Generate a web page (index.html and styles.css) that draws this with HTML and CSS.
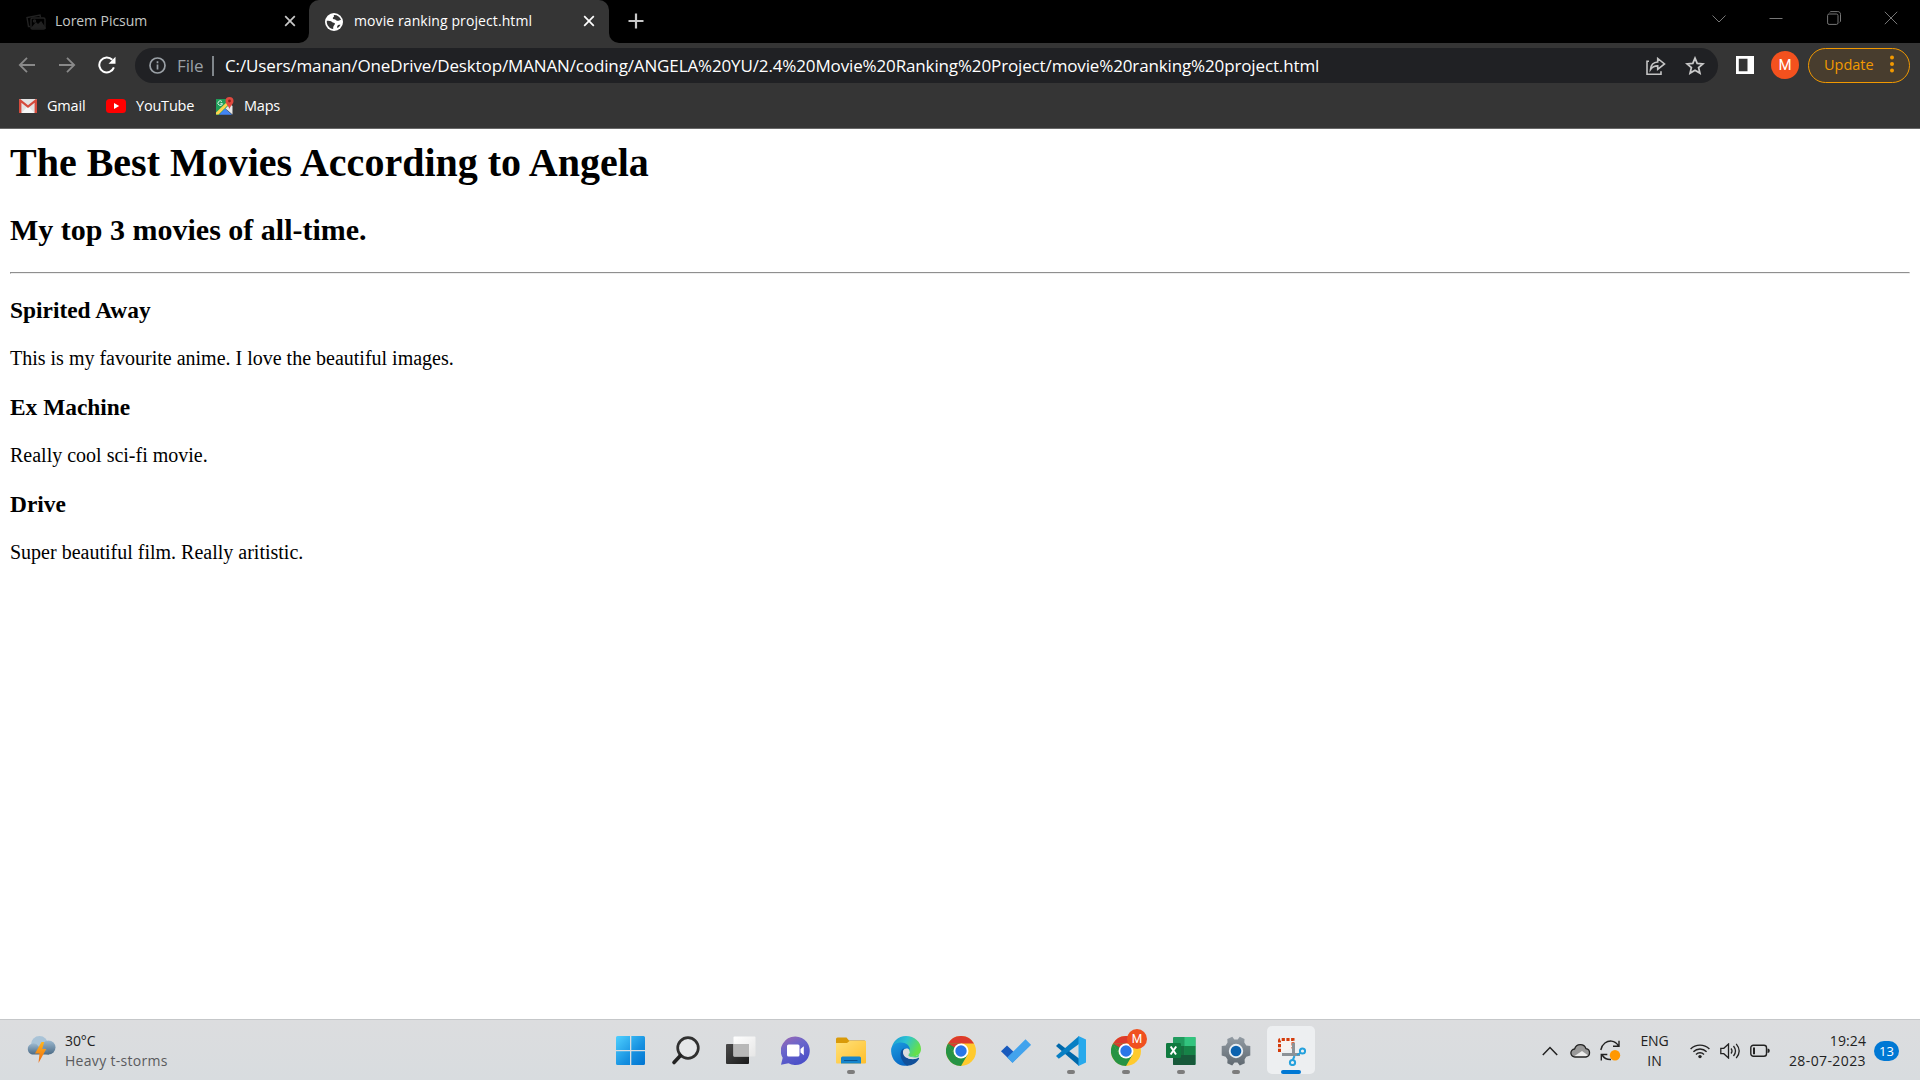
FILE: index.html
```html
<!DOCTYPE html>
<html lang="en">
<head>
<meta charset="utf-8">
<title>movie ranking project.html</title>
<link rel="stylesheet" href="styles.css">
</head>
<body>
<div class="screen">
  <header class="browser">
    <div class="tabs">
      <div class="tab">
        <svg class="tab-icon" width="20" height="16" viewBox="0 0 20 16" fill="none" stroke="#222" stroke-width="1.4"><path d="M4 12.5H2.5L1 3.5 14 1l.5 2.500"/><rect x="5" y="4" width="14" height="11" rx="1.500"/><path d="M6 14l4-5 2 2 3-3 4 6z" fill="#222"/><circle cx="8.500" cy="7" r="1"/></svg>
        <span class="tab-title first-title">Lorem Picsum</span>
        <svg class="tab-close" width="12" height="12" viewBox="0 0 12 12" stroke="#c8c8c8" stroke-width="1.700"><path d="M1.200 1.200l9.600 9.600M10.800 1.200l-9.600 9.600"/></svg>
      </div>
      <div class="tab active">
        <svg class="tab-icon" width="18" height="18" viewBox="0 0 18 18"><circle cx="9" cy="9" r="9" fill="#fff"/><path d="M1.800 7.800c2.200.3 4.200-.2 5.200 1.100.8 1 2.700.3 2.900 1.700.2 1.600-2 1.700-1.700 5.400C4.600 15.800 1.300 12 1.800 7.800zM8.600 2c3.600-.3 6.500 1.800 7.400 5-1.500-.4-2.200 1-3.700.7-1.400-.2-1.600-1.700-3.200-1.500-1.300.1-1.700-1.200-.8-1.900.8-.6 1-1.500.3-2.300zM12.300 12.900c.5-.9 1.800-1.300 3.200-1.100-.7 1.500-1.800 2.600-3.200 3.300-.2-.8-.3-1.500 0-2.200z" fill="#353535"/></svg>
        <span class="tab-title second-title">movie ranking project.html</span>
        <svg class="tab-close" width="12" height="12" viewBox="0 0 12 12" stroke="#fff" stroke-width="1.700"><path d="M1.200 1.200l9.600 9.600M10.800 1.200l-9.600 9.600"/></svg>
      </div>
      <svg class="new-tab" width="16" height="16" viewBox="0 0 16 16" stroke="#c8c8c8" stroke-width="2.200"><path d="M8 .5v15M.5 8h15"/></svg>
      <div class="window-controls">
        <svg width="14" height="14" viewBox="0 0 14 14"><path d="M.5 4.500L7 11l6.500-6.500"/></svg>
        <svg width="14" height="14" viewBox="0 0 14 14"><path d="M.5 7.500h13"/></svg>
        <svg width="14" height="14" viewBox="0 0 14 14"><rect x=".6" y="3" width="10.400" height="10.400" rx="1.500"/><path d="M2.800 1.500l.7-.9h7.300c1.500 0 2.700 1 2.700 2.700v7l-.8 1"/></svg>
        <svg width="14" height="14" viewBox="0 0 14 14"><path d="M.8.8l12.400 12.400M13.200.8L.8 13.200"/></svg>
      </div>
    </div>
    <div class="toolbar">
      <div class="nav">
        <svg width="18" height="18" viewBox="0 0 18 18" fill="none" stroke="#898989" stroke-width="1.800"><path d="M17 9H2M9 1.800L1.800 9 9 16.200"/></svg>
        <svg width="18" height="18" viewBox="0 0 18 18" fill="none" stroke="#898989" stroke-width="1.800"><path d="M1 9h15M9 1.800L16.200 9 9 16.200"/></svg>
        <svg width="18" height="18" viewBox="0 0 18 18"><path d="M15.900 11.400A7.500 7.500 0 1 1 14.300 3.800" fill="none" stroke="#fff" stroke-width="2"/><path d="M17.500.7v7H10.500z" fill="#fff"/></svg>
      </div>
      <div class="omnibox">
        <svg width="17" height="17" viewBox="0 0 17 17" fill="none" stroke="#9aa0a6" stroke-width="1.700"><circle cx="8.500" cy="8.500" r="7.500"/><path d="M8.500 7.500v5M8.500 4.300v1.900"/></svg>
        <span class="scheme">File</span>
        <i class="separator"></i>
        <span class="url">C:/Users/manan/OneDrive/Desktop/MANAN/coding/ANGELA%20YU/2.4%20Movie%20Ranking%20Project/movie%20ranking%20project.html</span>
        <svg class="share" width="20" height="18" viewBox="0 0 20 18" fill="none" stroke="#c4c4c4" stroke-width="1.600"><path d="M3 4.300H1v12.900h14v-3"/><path d="M4.500 12.500c.4-4.600 3.100-7.300 7.200-7.500V1.500L18.500 7l-6.800 5.300V8.900c-3.100 0-5.400 1-7.200 3.600z"/></svg>
        <svg class="star" width="20" height="19" viewBox="0 0 20 19" fill="none" stroke="#c9c9c9" stroke-width="1.800"><path d="M10 2.200l2.200 5.200 5.700.5-4.300 3.700 1.300 5.500-4.900-2.900-4.900 2.900 1.300-5.500L2.100 7.900l5.700-.5z"/></svg>
      </div>
      <svg class="side-panel" width="18" height="18" viewBox="0 0 18 18"><path fill="#fff" fill-rule="evenodd" d="M0 0h18v18H0zM2.800 2.800v12.400h8.700V2.800z"/></svg>
      <span class="avatar">M</span>
      <div class="update"><span>Update</span><svg width="4" height="18" viewBox="0 0 4 18" fill="#f29900"><circle cx="2" cy="2.500" r="2"/><circle cx="2" cy="9" r="2"/><circle cx="2" cy="15.500" r="2"/></svg></div>
    </div>
    <nav class="bookmarks">
      <div class="bookmark gmail">
        <svg width="18" height="14" viewBox="0 0 18 14"><rect width="18" height="14" rx="1.200" fill="#e3e3e3"/><path d="M2.500 14L9 7l6.500 7z" fill="#f7f7f7"/><path d="M0 14V1.200C0 .5.500 0 1.200 0L9 6.300 16.800 0c.7 0 1.200.5 1.200 1.200V14h-2.400V3.700L9 9 2.400 3.700V14z" fill="#d54b3d"/></svg>
        <span>Gmail</span>
      </div>
      <div class="bookmark youtube">
        <svg width="20" height="14" viewBox="0 0 20 14"><rect width="20" height="14" rx="3.500" fill="#f00"/><path d="M8 4l5.200 3L8 10z" fill="#fff"/></svg>
        <span>YouTube</span>
      </div>
      <div class="bookmark maps">
        <svg width="18" height="18" viewBox="0 0 18 18"><path d="M0 2h13v7L3 18H0z" fill="#1f9d59"/><path d="M3 17.700L9 11.500l7 6.200z" fill="#4285f4"/><path d="M0 15.500L12 4l2 2L2.500 17.500H0z" fill="#ffd34d"/><path d="M9.500 11.500L14 7l2.500 2v8.500z" fill="#e8e8e8"/><path d="M6 4.600a2.300 2.300 0 1 0 .5 2.100H4.400" fill="none" stroke="#dff4e7" stroke-width="1"/><path d="M13.500 12.500C13.200 9 9.500 7.500 9.500 4a4 4 0 0 1 8 0c0 3.500-3.700 5-4 8.500z" fill="#e04a3f"/><circle cx="13.500" cy="4" r="1.400" fill="#8d221b"/></svg>
        <span>Maps</span>
      </div>
    </nav>
  </header>

  <main class="page">
    <h1>The Best Movies According to Angela</h1>
    <h2>My top 3 movies of all-time.</h2>
    <hr>
    <h3>Spirited Away</h3>
    <p>This is my favourite anime. I love the beautiful images.</p>
    <h3>Ex Machine</h3>
    <p>Really cool sci-fi movie.</p>
    <h3>Drive</h3>
    <p>Super beautiful film. Really aritistic.</p>
  </main>

  <footer class="taskbar">
    <svg width="0" height="0" class="defs">
      <defs>
        <linearGradient id="win" x1="0" y1="0" x2="1" y2="1"><stop offset="0" stop-color="#4fd0ff"/><stop offset=".6" stop-color="#1690e0"/><stop offset="1" stop-color="#0074d1"/></linearGradient>
        <linearGradient id="dark" x1="0" y1="0" x2="1" y2="1"><stop offset="0" stop-color="#4a4a4a"/><stop offset="1" stop-color="#1a1a1a"/></linearGradient>
        <linearGradient id="light" x1="0" y1="0" x2="1" y2="1"><stop offset="0" stop-color="#fff"/><stop offset="1" stop-color="#e6e6e6"/></linearGradient>
        <linearGradient id="chat" x1="0" y1="0" x2=".5" y2="1"><stop offset="0" stop-color="#a067b0"/><stop offset=".45" stop-color="#6a66cb"/><stop offset="1" stop-color="#4c50c8"/></linearGradient>
        <linearGradient id="folder" x1="0" y1="0" x2="1" y2="1"><stop offset="0" stop-color="#ffe17a"/><stop offset="1" stop-color="#ffbf2b"/></linearGradient>
        <linearGradient id="edge-top" x1="0" y1="0" x2="1" y2=".4"><stop offset="0" stop-color="#1695d5"/><stop offset=".5" stop-color="#2cc3d2"/><stop offset="1" stop-color="#66e04a"/></linearGradient>
        <linearGradient id="edge-left" x1="0" y1="0" x2=".5" y2="1"><stop offset="0" stop-color="#1b9de0"/><stop offset="1" stop-color="#0867c4"/></linearGradient>
        <linearGradient id="gear" x1="0" y1="0" x2="0" y2="1"><stop offset="0" stop-color="#929ba3"/><stop offset="1" stop-color="#606971"/></linearGradient>
        <linearGradient id="cloud" x1="0" y1="0" x2="0" y2="1"><stop offset="0" stop-color="#9bb8cf"/><stop offset="1" stop-color="#4c6b86"/></linearGradient>
        <linearGradient id="bolt" x1="0" y1="0" x2="0" y2="1"><stop offset="0" stop-color="#ffb51d"/><stop offset="1" stop-color="#ee6810"/></linearGradient>
        <symbol id="chrome" viewBox="0 0 30 30"><circle cx="15" cy="15" r="15" fill="#ffca2e"/><path d="M2 7.500A15 15 0 0 1 28 7.500H15z" fill="#dc3a2d"/><path d="M2 7.500A15 15 0 0 0 15 30l6.500-11.300L8.500 18.700z" fill="#269344"/><path d="M2 7.500L8.500 18.700 15 15V7.500z" fill="#269344"/><path d="M2 7.500h13v7l-5 2z" fill="#dc3a2d"/><path d="M2 7.500L8.500 18.800l4-5z" fill="#269344"/><circle cx="15" cy="15" r="7.500" fill="#fff"/><circle cx="15" cy="15" r="5.700" fill="#2a76e8"/></symbol>
      </defs>
    </svg>
    <div class="weather">
      <svg width="31" height="28" viewBox="0 0 31 28"><circle cx="14.500" cy="8.500" r="8.500" fill="#a9c3d7"/><circle cx="23.500" cy="11.500" r="7" fill="url(#cloud)"/><path d="M6 8a6 6 0 0 1 7.500 2.500c4 .5 10 2 10.500 8H7A5.600 5.600 0 0 1 6 8z" fill="url(#cloud)"/><path d="M16.500 6h2.700l-2 7h4.100L13.500 27l1-9.500H10z" fill="url(#bolt)"/></svg>
      <div class="weather-text"><div class="temp">30°C</div><div class="condition">Heavy t-storms</div></div>
    </div>
    <div class="apps">
      <div class="app"><svg width="30" height="30" viewBox="0 0 30 30"><path d="M1.500 0H14v14H0V1.500Q0 0 1.500 0zM15.300 0h12.200Q29 0 29 1.500V14H15.300zM0 15.300h14V29H1.500Q0 29 0 27.500zM15.300 15.300H29v12.200q0 1.500-1.500 1.500H15.300z" fill="url(#win)"/></svg></div>
      <div class="app"><svg width="30" height="30" viewBox="0 0 30 30"><circle cx="17" cy="12" r="10.300" fill="#e5e7e9" stroke="#303030" stroke-width="2.700"/><path d="M9.500 19.500l-6.500 7" stroke="#222" stroke-width="3.600" stroke-linecap="round"/></svg></div>
      <div class="app"><svg width="30" height="30" viewBox="0 0 30 30"><rect y="8" width="23" height="20" rx="1" fill="url(#dark)"/><rect x="7.500" y=".5" width="22" height="20" rx="1" fill="url(#light)"/><path d="M7.500 8H23v12.500H7.500z" fill="#b8b8b8"/></svg></div>
      <div class="app"><svg width="30" height="30" viewBox="0 0 30 30"><path d="M14.500.5a14.300 14.300 0 1 1-7 26.800L0 28.800l1.700-7A14.300 14.300 0 0 1 14.500.5z" fill="url(#chat)"/><rect x="6" y="8.500" width="12.500" height="12" rx="1.500" fill="#fff"/><path d="M19.500 13l3.300-2.800v9l-3.300-2.800z" fill="#fff"/></svg></div>
      <div class="app running"><svg width="30" height="30" viewBox="0 0 30 30"><path d="M0 3q0-1.500 1.500-1.500h9L13 4.500h15.500Q30 4.500 30 6v4H0z" fill="#d99a09"/><path d="M0 7h11l2.500-2H30v21.500q0 1-1 1H1q-1 0-1-1z" fill="url(#folder)"/><path d="M5 27.500V22q0-1.500 1.500-1.500h17q1.500 0 1.500 1.500v5.500z" fill="#1585cc"/><path d="M8 24.500h13.500" stroke="#09538f" stroke-width="1"/></svg></div>
      <div class="app"><svg width="30" height="30" viewBox="0 0 30 30"><path d="M.5 14C.7 6 7.200 0 15 0c8.500 0 15 6 15 13 0 4.700-3.800 7.500-8 7.500-4 0-5.500-1.300-3.500-3.500L17 11z" fill="url(#edge-top)"/><path d="M.1 15C0 8.500 5.500 6.500 10 6.500c5 0 9 3 9 7.500-1.500-2.800-7.300-2-7.300 3 0 6 5 9 9 10C13 34 .5 27.500.1 15z" fill="url(#edge-left)"/><path d="M13.200 12.200C7.500 14 8.500 24.500 16 29.800c5.500 0 9.800-3.200 12-7 .4-.8-.2-1.200-.9-.8C21 24.500 12 22.500 12 16.500c0-2 .5-3.300 1.200-4.300z" fill="#11509a"/><path d="M12.300 15c.5-2.800 5.800-3.200 6.400.7.300 1.800-1.700 2.300-.6 3.700 1.400 1.700 6.200 1.200 8.800.2v2.500C21 25 12 22 12.300 15z" fill="#dcdee0"/><path d="M18.700 14c.3 2.300-1.700 3.200-.6 4.700 1.700 2.400 8 1.900 10.300-1l-1 3.300c-2 .8-8 .8-10-1.200z" fill="#4fd67c"/></svg></div>
      <div class="app"><svg width="30" height="30"><use href="#chrome"/></svg></div>
      <div class="app"><svg width="30" height="30" viewBox="0 0 30 30"><path d="M0 15.300L6 9.500l11.500 11-6 6z" fill="#185abd"/><path d="M24.500 3.300l5.700 5.600-18.700 18-5.300-5.500z" fill="#42a3ed"/></svg></div>
      <div class="app running"><svg width="30" height="30" viewBox="0 0 30 30"><path d="M0 10l2.800-2.700L23 22.500V30z" fill="#0068aa"/><path d="M0 20l2.800 2.700L23 8V0z" fill="#087fc4"/><path d="M22.500 0L30 3.500v23L22.500 30z" fill="#28a9ec"/></svg></div>
      <div class="app running"><svg width="30" height="30"><use href="#chrome"/></svg><span class="profile">M</span></div>
      <div class="app running"><svg width="30" height="30" viewBox="0 0 30 30"><rect x="7" y="1" width="22.500" height="28" rx="1" fill="#219b5e"/><path d="M18.500 1h11v9h-11z" fill="#32c47e"/><path d="M7 10h11.500v9H7z" fill="#176f40"/><path d="M18.500 10h11v9h-11z" fill="#168347"/><path d="M7 19h22.500v9q0 1-1 1H8q-1 0-1-1z" fill="#17593a"/><rect y="7" width="15" height="15" rx="1.300" fill="#0f7a3f"/><path d="M4.700 10.500l5.300 8M10.200 10.500l-5.600 8" stroke="#fff" stroke-width="2"/></svg></div>
      <div class="app running"><svg width="30" height="30" viewBox="0 0 30 30"><path d="M11.300.7l2 2.900h3.400l2-2.900 4.800 2.200-.2 3.700 2 2.900 4 .5v9.500l-4 1.200-1.700 2.900.2 3.600-5 2.400-2.300-3h-3l-2.300 3-4.900-2.400.2-3.600-1.800-2.900-4-1.200V10l4-.6 1.800-2.900-.2-3.600z" fill="url(#gear)"/><circle cx="15" cy="15" r="7.200" fill="#e8eef3"/><circle cx="15" cy="15" r="5.300" fill="#0b62af"/></svg></div>
      <div class="app running current"><svg width="30" height="30" viewBox="0 0 30 30"><path d="M3.500 16V4.500q0-1 1-1H17v9" fill="#f7f3f1" stroke="#d43b0a" stroke-width="3" stroke-dasharray="3.200 1.500"/><path d="M17.500 7v12.500M6 18.500h18" stroke="#8c9297" stroke-width="3"/><g fill="none" stroke="#25a1dd" stroke-width="2"><circle cx="26.500" cy="15" r="2.600"/><circle cx="16.500" cy="26.500" r="2.600"/><path d="M24.500 17l-3.500 2M17 23.500l1.500-3.500"/></g></svg></div>
    </div>
    <div class="tray">
      <svg class="up" width="16" height="10" viewBox="0 0 16 10" fill="none" stroke="#222" stroke-width="1.500"><path d="M.8 9L8 1.500 15.200 9"/></svg>
      <svg class="cloud" width="21" height="14" viewBox="0 0 21 14"><path d="M5.200 13a4 4 0 0 1-.6-8A6 6 0 0 1 16 4.700a4.200 4.200 0 0 1 0 8.300z" fill="#999"/><path d="M3 13L12 7l7 5-3 1.500H5z" fill="#ededed"/><path d="M5.200 13a4 4 0 0 1-.6-8A6 6 0 0 1 16 4.700a4.200 4.200 0 0 1 0 8.300z" fill="none" stroke="#222" stroke-width="1.300"/></svg>
      <svg class="sync" width="21" height="21" viewBox="0 0 21 21" fill="none" stroke="#222" stroke-width="1.400"><path d="M.8 10C2 3.500 7 .8 11.500 1.100c3.500.4 5.800 2.700 7.200 5M19 .8v5.500h-6M11 19.500c-4.500.3-7-1.500-9-4.500M1.300 20.500v-6h6"/><circle cx="15" cy="15.300" r="5.200" fill="#ff9800" stroke="none"/></svg>
      <div class="language"><div>ENG</div><div>IN</div></div>
      <svg class="wifi" width="20" height="16" viewBox="0 0 20 16" fill="none" stroke="#222" stroke-width="1.400"><path d="M.6 6a13.300 13.300 0 0 1 18.800 0M3.400 8.800a9.300 9.300 0 0 1 13.200 0M6 11.500a5.600 5.600 0 0 1 8 0"/><circle cx="10" cy="13.600" r="1.700" fill="#222" stroke="none"/></svg>
      <svg class="volume" width="20" height="16" viewBox="0 0 20 16" fill="none" stroke="#222" stroke-width="1.300"><path d="M.8 5.300h3L8.500 1v14l-4.700-4.300h-3z"/><path d="M11 5.500q2 2.500 0 5M13.500 3q4 5 0 10M16.200.8q6 7.200 0 14.400"/></svg>
      <svg class="battery" width="20" height="14" viewBox="0 0 20 14"><rect x=".8" y="1.300" width="15.700" height="11" rx="2.500" fill="none" stroke="#222" stroke-width="1.400"/><path d="M3 3.500h2v6.800H3zM17.500 4.500q2.300 0 2.300 2.300t-2.300 2.300z" fill="#222"/></svg>
      <div class="clock"><div class="time">19:24</div><div class="date">28-07-2023</div></div>
      <span class="count">13</span>
    </div>
  </footer>
</div>
</body>
</html>
```

FILE: styles.css
```css
* { box-sizing: border-box; }
body { margin: 0; font-family: "Open Sans", "Noto Sans", sans-serif; }
svg { display: block; flex: none; }
.defs { position: absolute; }
.screen { width: 1920px; height: 1080px; display: flex; flex-direction: column; overflow: hidden; background: #fff; }

/* Browser chrome */
.browser { height: 129px; flex: none; background: #353535; border-bottom: 1px solid #686868; white-space: nowrap; }
.tabs { height: 43px; display: flex; align-items: center; background: linear-gradient(#000 0 33px, #353535 33px); }
.tab { display: flex; align-items: center; height: 43px; width: 309px; padding: 0 13px 0 26px; background: #000; border-bottom-right-radius: 10px; color: #c4c7c5; font-size: 14px; }
.tab.active { width: 300px; padding: 0 14px 0 16px; background: #353535; border-radius: 10px 10px 0 0; color: #fff; }
.tab-title { margin-top: -2px; }
.first-title { margin-left: 9px; letter-spacing: -.05px; }
.second-title { margin-left: 11px; letter-spacing: .09px; }
.tab-close { margin: -1px 0 0 auto; }
.new-tab { width: 35px; height: 43px; padding: 13px 0 14px 19px; background: #000; border-bottom-left-radius: 10px; }
.window-controls { flex: 1; height: 43px; display: flex; justify-content: flex-end; gap: 43.500px; padding: 11px 22px 0 0; background: #000; fill: none; stroke: #777; stroke-width: 1; }
.toolbar { height: 45px; display: flex; align-items: center; padding: 0 10px 1px 18px; }
.nav { width: 117px; display: flex; gap: 22px; }
.omnibox { width: 1583px; height: 35px; margin-top: 1px; display: flex; align-items: center; padding: 0 13px 0 14px; border-radius: 18px; background: #202124; font-size: 17px; color: #fff; }
.scheme { width: 34px; margin-left: 11px; margin-right: 1px; color: #9aa0a6; letter-spacing: -.1px; }
.separator { width: 2px; height: 20px; background: #80868b; }
.url { margin-left: 11px; letter-spacing: -.135px; }
.share { margin-left: auto; }
.star { margin-left: 19px; }
.side-panel { margin-left: 18px; }
.avatar { width: 28px; height: 28px; margin-left: 17px; border-radius: 50%; background: #f4511e; color: #fff; font: 15px/28px Roboto, sans-serif; text-align: center; }
.update { width: 102px; height: 35px; margin-left: 9px; display: flex; align-items: center; justify-content: space-between; padding: 0 15px 2px 15px; border: 1px solid #f29900; border-radius: 18px; background: #483d2e; color: #f29900; font-size: 14.500px; }
.bookmarks { height: 36px; display: flex; align-items: center; padding: 0 0 1px 19px; color: #fff; font-size: 14.500px; }
.bookmark { display: flex; align-items: center; }
.gmail { width: 87px; gap: 10px; }
.youtube { width: 110px; gap: 10px; }
.maps { gap: 10px; }
.bookmark span { letter-spacing: -.2px; }

/* Document */
.page { flex: 1; padding: 11px 10px 10px; font: 20px/23px "Liberation Serif", serif; color: #000; }
.page h1 { margin: 0 0 26.800px; font-size: 40px; line-height: 46px; }
.page h2 { margin: 0 0 24.900px; font-size: 30px; line-height: 34px; }
.page hr { margin: 0; border: 1px solid; border-color: #8f8f8f #eee #eee #8f8f8f; }
.page h3 { margin: 23.400px 0; font-size: 23.400px; line-height: 27px; }
.page p { margin: 0; }

/* Taskbar */
.taskbar { height: 61px; flex: none; display: flex; align-items: center; border-top: 1px solid #c5c7c9; background: linear-gradient(#dcdddf, #d8dcdf); color: #222; font-size: 14px; line-height: 20px; white-space: nowrap; }
.weather { width: 603px; display: flex; gap: 9px; padding: 1px 0 0 25px; }
.temp { letter-spacing: -.1px; }
.condition { color: #5a5b5d; letter-spacing: .3px; }
.weather svg { margin-top: 5px; }
.apps { display: flex; height: 60px; }
.app { position: relative; width: 55px; height: 60px; padding: 15.500px 0 0 13px; }
.app.running::after { content: ""; position: absolute; left: 24px; top: 50px; width: 8px; height: 4px; border-radius: 2px; background: #7c7c7c; }
.app.current::before { content: ""; position: absolute; left: 4px; top: 6px; width: 48px; height: 48px; border-radius: 5px; background: #edeff1; }
.app.current svg { position: relative; }
.app.current::after { left: 18px; width: 20px; background: #0078d4; }
.profile { position: absolute; left: 29px; top: 9px; width: 20px; height: 20px; border-radius: 50%; background: #f0501f; color: #fff; font: 12px/20px Roboto, sans-serif; text-align: center; }
.tray { flex: 1; display: flex; align-items: center; padding: 1px 21px 0 0; justify-content: flex-end; }
.cloud { margin-left: 12px; }
.sync { margin-left: 9px; }
.language { width: 69px; padding-right: 2px; text-align: center; letter-spacing: -.1px; }
.volume { margin-left: 10px; }
.battery { margin-left: 10px; }
.clock { width: 96px; text-align: right; }
.time { letter-spacing: .1px; }
.date { letter-spacing: .4px; }
.count { width: 25px; height: 20px; margin-left: 8px; border-radius: 10px; background: #0078d4; color: #fff; font-size: 13px; text-align: center; }
```
